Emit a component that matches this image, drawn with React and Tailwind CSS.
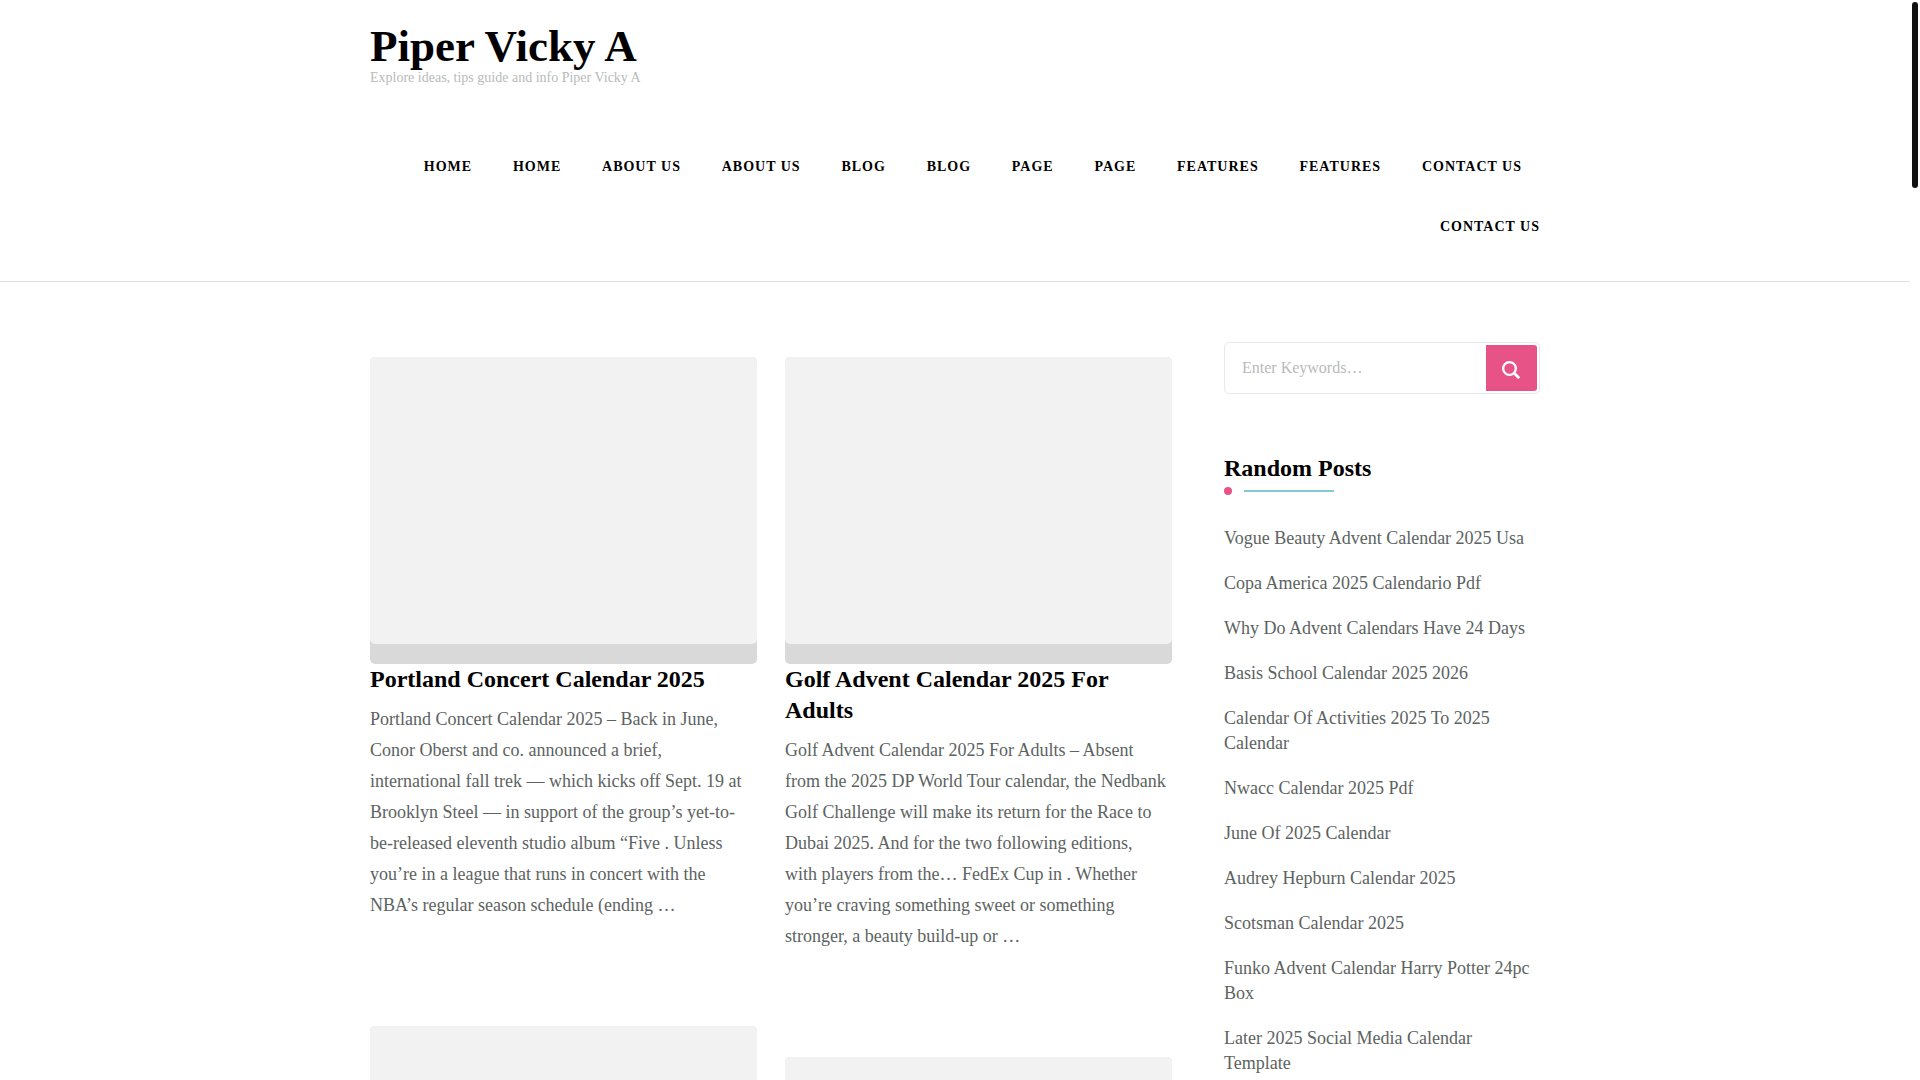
const navItems = [
  "Home",
  "Home",
  "About Us",
  "About Us",
  "Blog",
  "Blog",
  "Page",
  "Page",
  "Features",
  "Features",
  "Contact Us",
  "Contact Us",
];

const columns = [
  [
    {
      title: "Portland Concert Calendar 2025",
      excerpt:
        "Portland Concert Calendar 2025 – Back in June, Conor Oberst and co. announced a brief, international fall trek — which kicks off Sept. 19 at Brooklyn Steel — in support of the group’s yet-to-be-released eleventh studio album “Five . Unless you’re in a league that runs in concert with the NBA’s regular season schedule (ending …",
    },
    { title: "", excerpt: "" },
  ],
  [
    {
      title: "Golf Advent Calendar 2025 For Adults",
      excerpt:
        "Golf Advent Calendar 2025 For Adults – Absent from the 2025 DP World Tour calendar, the Nedbank Golf Challenge will make its return for the Race to Dubai 2025. And for the two following editions, with players from the… FedEx Cup in . Whether you’re craving something sweet or something stronger, a beauty build-up or …",
    },
    { title: "", excerpt: "" },
  ],
];

const randomPosts = [
  "Vogue Beauty Advent Calendar 2025 Usa",
  "Copa America 2025 Calendario Pdf",
  "Why Do Advent Calendars Have 24 Days",
  "Basis School Calendar 2025 2026",
  "Calendar Of Activities 2025 To 2025 Calendar",
  "Nwacc Calendar 2025 Pdf",
  "June Of 2025 Calendar",
  "Audrey Hepburn Calendar 2025",
  "Scotsman Calendar 2025",
  "Funko Advent Calendar Harry Potter 24pc Box",
  "Later 2025 Social Media Calendar Template",
];

const Header = () => {
  return (
    <header className="border-b border-[#e2e2e2] pt-5 pb-6">
      <div className="mx-auto max-w-[1170px]">
        <h1 className="text-[45px] leading-[52px] font-bold text-black">
          <a href="#">Piper Vicky A</a>
        </h1>
        <p className="-mt-1.5 text-sm leading-6 text-[#b7bbba]">
          Explore ideas, tips guide and info Piper Vicky A
        </p>
        <nav className="mt-[47px] text-right text-[19px] leading-[60px]">
          {navItems.map((item, i) => (
            <span key={i}>
              <a
                href="#"
                className={`inline-block align-top text-sm leading-[60px] font-bold tracking-[1px] text-black uppercase ${
                  i === navItems.length - 1 ? "ml-[18px]" : "mx-[18px]"
                }`}
              >
                {item}
              </a>{" "}
            </span>
          ))}
        </nav>
      </div>
    </header>
  );
};

const PostCard = ({ post }) => {
  return (
    <article className="mb-[105px]">
      <a href="#" aria-label={post.title || "Post"} className="block rounded-[5px] bg-[#d9d9d9] pb-5">
        <div className="h-[287px] rounded-[5px] bg-[#f2f2f2]" />
      </a>
      {post.title && (
        <>
          <h2 className="text-2xl leading-[31px] font-bold text-black">
            <a href="#">{post.title}</a>
          </h2>
          <p className="mt-[9px] pr-1 text-lg leading-[31px]">{post.excerpt}</p>
        </>
      )}
    </article>
  );
};

const SearchForm = () => {
  return (
    <form className="flex rounded-[5px] border border-[#e8e8e8] p-[2px]" onSubmit={(e) => e.preventDefault()}>
      <input
        type="search"
        aria-label="Search"
        placeholder="Enter Keywords…"
        className="h-[46px] min-w-0 flex-1 bg-transparent px-[15px] text-base outline-none placeholder:text-[#b7bbba]"
      />
      <button
        type="submit"
        aria-label="Search"
        className="flex h-[46px] w-[51px] items-center justify-center rounded-r-[3px] bg-[#e75387] pr-0.5 text-white"
      >
        <svg viewBox="0 0 18 18" className="mt-1 h-[18px] w-[18px]" fill="none" stroke="currentColor">
          <circle cx="7.5" cy="7.5" r="6.35" strokeWidth="2.3" />
          <path d="M11.6 11.6l5.6 5.6" strokeWidth="2.8" />
        </svg>
      </button>
    </form>
  );
};

const Sidebar = () => {
  return (
    <aside className="w-[316px] shrink-0">
      <SearchForm />
      <section className="mt-[58px]">
        <h2 className="text-2xl leading-8 font-bold text-black">Random Posts</h2>
        <div className="mt-[3px] flex items-center gap-3">
          <span className="h-2 w-2 rounded-full bg-[#e75387]" />
          <span className="h-[2px] w-[90px] bg-[#81cad1]" />
        </div>
        <ul className="mt-[31px] flex flex-col gap-5">
          {randomPosts.map((title) => (
            <li key={title} className="text-lg leading-[25px]">
              <a href="#">{title}</a>
            </li>
          ))}
        </ul>
      </section>
    </aside>
  );
};

export default function App() {
  return (
    <div className="relative h-screen overflow-hidden bg-white pr-[10px] font-['Liberation_Serif','Times_New_Roman',serif] text-[#5c6361]">
      <Header />
      <main className="mx-auto flex max-w-[1170px] gap-[52px] pt-[60px]">
        <div className="flex min-w-0 flex-1 gap-7 pt-[15px]">
          {columns.map((posts, i) => (
            <div key={i} className="min-w-0 flex-1">
              {posts.map((post, j) => (
                <PostCard key={j} post={post} />
              ))}
            </div>
          ))}
        </div>
        <Sidebar />
      </main>
      {/* scroll thumb */}
      <div className="absolute top-[2px] right-[2px] h-[186px] w-[6px] rounded-full bg-[#111]" />
    </div>
  );
}
